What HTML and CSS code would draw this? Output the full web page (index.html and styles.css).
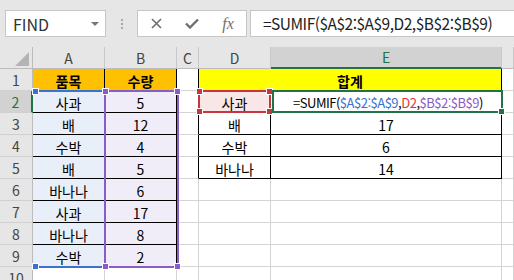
FILE: index.html
```html
<!DOCTYPE html>
<html lang="ko">
<head>
    <meta charset="UTF-8">
    <title>SUMIF</title>
    <link rel="stylesheet" href="styles.css">
</head>
<body>

    <!-- 이름 상자 / 수식 입력줄 -->
    <div class="toolbar">
        <div class="namebox">
            <span>FIND</span>
            <span class="arrow"></span>
        </div>
        <div class="grip"><i></i><i></i><i></i></div>
        <div class="btnbox">
            <span class="btn">
                <svg width="11" height="11" viewBox="0 0 11 11"><path d="M1 1L10 10M10 1L1 10" stroke="#6f6f6f" stroke-width="1.6" fill="none"/></svg>
            </span>
            <span class="btn">
                <svg width="14" height="11" viewBox="0 0 14 11"><path d="M1 5.5L5 9.5L13 1.5" stroke="#6f6f6f" stroke-width="2.4" fill="none"/></svg>
            </span>
            <span class="btn fx">fx</span>
        </div>
        <div class="fbox">=SUMIF($A$2:$A$9,D2,$B$2:$B$9)</div>
    </div>

    <!-- 시트 -->
    <div class="sheet">
        <div class="corner"><span class="tri"></span></div>
        <div class="ch">A</div>
        <div class="ch">B</div>
        <div class="ch">C</div>
        <div class="ch">D</div>
        <div class="ch sel">E</div>
        <div class="ch"></div>

        <div class="rh">1</div>
        <div class="c org br bb bold">품목</div>
        <div class="c org br bb bold">수량</div>
        <div class="c br"></div>
        <div class="c yel br bb bold merged">합계</div>
        <div class="c"></div>

        <div class="rh sel">2</div>
        <div class="c blu br bb">사과</div>
        <div class="c pur br bb">5</div>
        <div class="c br"></div>
        <div class="c pink br bb">사과</div>
        <div class="c br bb formula">=SUMIF(<span class="ref-a">$A$2:$A$9</span>,<span class="ref-d">D2</span>,<span class="ref-b">$B$2:$B$9</span>)</div>
        <div class="c"></div>

        <div class="rh">3</div>
        <div class="c blu br bb">배</div>
        <div class="c pur br bb">12</div>
        <div class="c br"></div>
        <div class="c br bb">배</div>
        <div class="c br bb">17</div>
        <div class="c"></div>

        <div class="rh">4</div>
        <div class="c blu br bb">수박</div>
        <div class="c pur br bb">4</div>
        <div class="c br"></div>
        <div class="c br bb">수박</div>
        <div class="c br bb">6</div>
        <div class="c"></div>

        <div class="rh">5</div>
        <div class="c blu br bb">배</div>
        <div class="c pur br bb">5</div>
        <div class="c br"></div>
        <div class="c br bb">바나나</div>
        <div class="c br bb">14</div>
        <div class="c"></div>

        <div class="rh">6</div>
        <div class="c blu br bb">바나나</div>
        <div class="c pur br bb">6</div>
        <div class="c"></div>
        <div class="c"></div>
        <div class="c"></div>
        <div class="c"></div>

        <div class="rh">7</div>
        <div class="c blu br bb">사과</div>
        <div class="c pur br bb">17</div>
        <div class="c"></div>
        <div class="c"></div>
        <div class="c"></div>
        <div class="c"></div>

        <div class="rh">8</div>
        <div class="c blu br bb">바나나</div>
        <div class="c pur br bb">8</div>
        <div class="c"></div>
        <div class="c"></div>
        <div class="c"></div>
        <div class="c"></div>

        <div class="rh">9</div>
        <div class="c blu br bb">수박</div>
        <div class="c pur br bb">2</div>
        <div class="c"></div>
        <div class="c"></div>
        <div class="c"></div>
        <div class="c"></div>

        <div class="rh">10</div>
        <div class="c"></div>
        <div class="c"></div>
        <div class="c"></div>
        <div class="c"></div>
        <div class="c"></div>
        <div class="c"></div>

        <!-- 참조 범위 표시 -->
        <div class="range range-a"><i class="h h-tl"></i><i class="h h-bl"></i></div>
        <div class="range range-b"><i class="h h-tl"></i><i class="h h-tr"></i><i class="h h-bl"></i><i class="h h-br"></i></div>
        <div class="range range-d"><i class="h h-tl"></i><i class="h h-tr"></i><i class="h h-bl"></i><i class="h h-br"></i></div>
        <div class="range active"><i class="fill"></i></div>
    </div>

</body>
</html>
```

FILE: styles.css
```css
body {
    margin: 0;
    width: 514px;
    height: 280px;
    overflow: hidden;
    background: #e6e6e6;
    font-family: "Noto Sans CJK KR", "Noto Sans", sans-serif;
    color: #000;
}

/* toolbar */
.toolbar {
    display: flex;
    height: 47px;
    padding: 10px 0 0 5px;
    box-sizing: border-box;
}
.namebox {
    width: 101px;
    height: 27px;
    box-sizing: border-box;
    border: 1px solid #c6c6c6;
    background: #fff;
    display: flex;
    align-items: center;
    justify-content: space-between;
    padding: 0 6px 0 7px;
    font-size: 16px;
    color: #333;
}
.arrow {
    width: 0;
    height: 0;
    border-left: 4px solid transparent;
    border-right: 4px solid transparent;
    border-top: 4px solid #777;
}
.grip {
    width: 31px;
    display: flex;
    flex-direction: column;
    align-items: center;
    justify-content: center;
    gap: 2px;
    height: 27px;
}
.grip i {
    width: 2px;
    height: 2px;
    background: #a8a8a8;
}
.btnbox {
    width: 110px;
    height: 27px;
    box-sizing: border-box;
    border: 1px solid #c6c6c6;
    background: #fff;
    display: flex;
}
.btn {
    width: 36px;
    display: flex;
    align-items: center;
    justify-content: center;
}
.fx {
    font-family: "Liberation Serif", serif;
    font-style: italic;
    font-size: 16px;
    color: #6f6f6f;
}
.fbox {
    flex: 1;
    margin-left: 3px;
    height: 27px;
    box-sizing: border-box;
    border: 1px solid #c6c6c6;
    border-right: none;
    background: #fff;
    padding-left: 12px;
    font-size: 15.5px;
    letter-spacing: -0.5px;
    line-height: 25px;
    color: #222;
    white-space: nowrap;
}

/* sheet */
.sheet {
    position: relative;
    display: grid;
    grid-template-columns: 33px 72px 72px 22px 72px 231px 12px;
    grid-auto-rows: 22px;
    background: #fff;
    font-size: 14px;
}
.corner {
    background: #e6e6e6;
    border-right: 1px solid #bcbcbc;
    border-bottom: 1px solid #bcbcbc;
    position: relative;
}
.tri {
    position: absolute;
    right: 3px;
    bottom: 2px;
    width: 0;
    height: 0;
    border-left: 14px solid transparent;
    border-bottom: 14px solid #b4b4b4;
}
.ch, .rh {
    background: #e6e6e6;
    color: #444;
    display: flex;
    align-items: center;
    justify-content: center;
    border-right: 1px solid #c8c8c8;
    border-bottom: 1px solid #bcbcbc;
    font-size: 14px;
}
.rh {
    border-right-color: #bcbcbc;
    border-bottom-color: #d0d0d0;
}
.ch.sel {
    background: #d2d2d2;
    color: #217346;
    border-bottom: 2px solid #217346;
}
.rh.sel {
    background: #d2d2d2;
    color: #217346;
    border-right: 2px solid #217346;
}
.c {
    border-right: 1px solid #d4d4d4;
    border-bottom: 1px solid #d4d4d4;
    display: flex;
    align-items: center;
    justify-content: center;
    padding-top: 2px;
    box-sizing: border-box;
    white-space: nowrap;
    line-height: 18px;
}
.formula {
    font-size: 13px;
    letter-spacing: -0.5px;
    padding-left: 4px;
}
.br { border-right-color: #000; }
.bb { border-bottom-color: #000; }
.bold { font-weight: bold; }
.merged { grid-column: span 2; }
.org { background: #ffc000; }
.yel { background: #ffff00; }
.blu { background: #e8eff9; }
.pur { background: #f1edf8; }
.pink { background: #f9e7e7; }

.ref-a { color: #3b72d0; }
.ref-d { color: #e2353c; }
.ref-b { color: #8a5cc7; }

/* reference ranges drawn over the grid */
.range {
    position: absolute;
    box-sizing: border-box;
    pointer-events: none;
}
.range-a {
    left: 33px;
    top: 43px;
    width: 72px;
    height: 178px;
    border-top: 2px solid #3b72d0;
    border-bottom: 2px solid #3b72d0;
}
.range-b {
    left: 104px;
    top: 43px;
    width: 75px;
    height: 178px;
    border: 2px solid #8a5cc7;
}
.range-d {
    left: 198px;
    top: 43px;
    width: 73px;
    height: 23px;
    border: 2px solid #c8353c;
}
.active {
    left: 272px;
    top: 43px;
    width: 231px;
    height: 23px;
    border: 2px solid #217346;
}
.h {
    position: absolute;
    width: 5px;
    height: 5px;
    border: 1px solid #fff;
}
.range-a .h { background: #3b72d0; }
.range-b .h { background: #8a5cc7; }
.range-d .h { background: #c8353c; }
.h-tl { left: -4px; top: -4px; }
.h-tr { right: -4px; top: -4px; }
.h-bl { left: -4px; bottom: -4px; }
.h-br { right: -4px; bottom: -4px; }
.range-a .h-tl, .range-a .h-bl { left: -1px; }
.fill {
    position: absolute;
    right: -4px;
    bottom: -4px;
    width: 5px;
    height: 5px;
    background: #217346;
    border: 1px solid #fff;
}
```
